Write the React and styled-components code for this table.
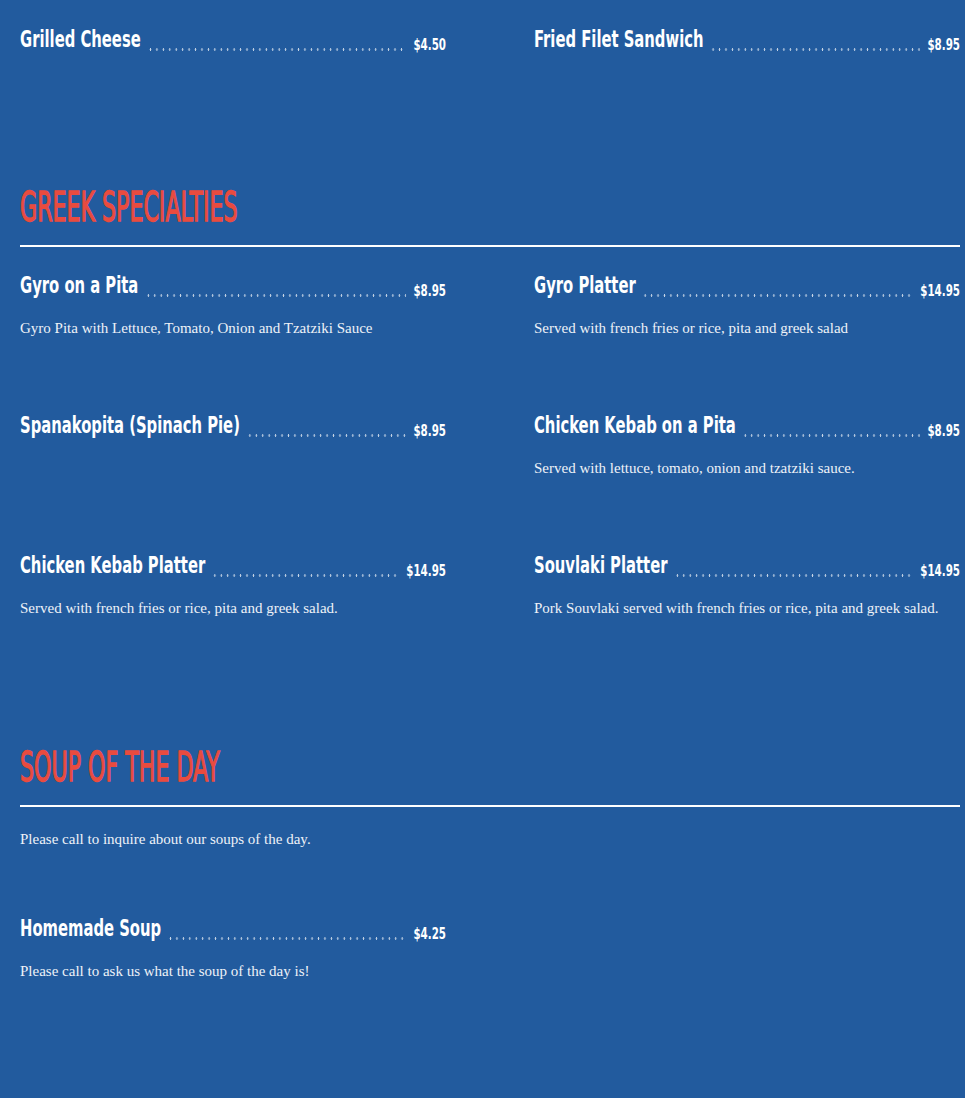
import styled, { createGlobalStyle } from "styled-components";

const GlobalStyle = createGlobalStyle`
  html, body {
    margin: 0;
    padding: 0;
    background: #225b9e;
    min-height: 100%;
  }
  body {
    font-family: "Liberation Serif", serif;
  }
`;

const NARROW = 0.715;

const Page = styled.div`
  width: 940px;
  padding: 25px 5px 60px 20px;
  color: #ffffff;
`;

const Section = styled.section`
  margin-top: ${(p) => p.gap || 0}px;
`;

const Heading = styled.h2`
  margin: 0;
  height: 48px;
  line-height: 48px;
  font-family: "DejaVu Sans", sans-serif;
  font-stretch: condensed;
  font-weight: 400;
  font-size: 40px;
  color: #e94b3f;
  -webkit-text-stroke: 1.3px #e94b3f;
  text-transform: uppercase;
  white-space: nowrap;
`;

const HeadingText = styled.span`
  display: inline-block;
  transform: scaleX(0.615);
  transform-origin: left center;
`;

const Rule = styled.hr`
  margin: 14px 0 0;
  border: 0;
  height: 2px;
  background: #ffffff;
`;

const Grid = styled.div`
  display: grid;
  grid-template-columns: 426px 426px;
  column-gap: 88px;
  margin-top: ${(p) => p.offset || 0}px;
`;

const Item = styled.div`
  padding-bottom: 73px;
`;

/* the title line is laid out wide and squeezed, to get the narrow sign-painter letters */
const TitleRow = styled.div`
  display: flex;
  align-items: flex-end;
  height: 28px;
  width: calc(100% / ${NARROW});
  transform: scaleX(${NARROW});
  transform-origin: left center;
`;

const Title = styled.h3`
  margin: 0;
  font-family: "DejaVu Sans", sans-serif;
  font-stretch: condensed;
  font-weight: 700;
  font-size: 23px;
  line-height: 28px;
  color: #ffffff;
  white-space: nowrap;
`;

const Leader = styled.span`
  flex: 1;
  height: 3px;
  margin: 0 10px 0 9px;
  background-image: radial-gradient(circle at center, rgba(255, 255, 255, 0.75) 1px, transparent 1.4px);
  background-size: 9px 3px;
  background-repeat: repeat-x;
  transform: translateY(-2px);
`;

const Price = styled.span`
  font-family: "DejaVu Sans", sans-serif;
  font-stretch: condensed;
  font-weight: 700;
  font-size: 16px;
  line-height: 20px;
  color: #ffffff;
  transform: translateY(2px);
`;

const Desc = styled.p`
  margin: 19px 0 0;
  font-family: "Liberation Serif", serif;
  font-size: 15px;
  line-height: 20px;
  color: #eef2f8;
`;

const Note = styled.p`
  margin: 22px 0 0;
  font-family: "Liberation Serif", serif;
  font-size: 15px;
  line-height: 20px;
  color: #eef2f8;
`;

const MenuItem = ({ item }) => (
  <Item>
    <TitleRow>
      <Title>{item.name}</Title>
      <Leader />
      <Price>{item.price}</Price>
    </TitleRow>
    {item.desc && <Desc>{item.desc}</Desc>}
  </Item>
);

const sandwiches = [
  { name: "Grilled Cheese", price: "$4.50" },
  { name: "Fried Filet Sandwich", price: "$8.95" },
];

const greek = [
  { name: "Gyro on a Pita", price: "$8.95", desc: "Gyro Pita with Lettuce, Tomato, Onion and Tzatziki Sauce" },
  { name: "Gyro Platter", price: "$14.95", desc: "Served with french fries or rice, pita and greek salad" },
  { name: "Spanakopita (Spinach Pie)", price: "$8.95" },
  { name: "Chicken Kebab on a Pita", price: "$8.95", desc: "Served with lettuce, tomato, onion and tzatziki sauce." },
  { name: "Chicken Kebab Platter", price: "$14.95", desc: "Served with french fries or rice, pita and greek salad." },
  { name: "Souvlaki Platter", price: "$14.95", desc: "Pork Souvlaki served with french fries or rice, pita and greek salad." },
];

const soups = [
  { name: "Homemade Soup", price: "$4.25", desc: "Please call to ask us what the soup of the day is!" },
];

export default function App() {
  return (
    <>
      <GlobalStyle />
      <Page>
        <Section>
          <Grid>
            {sandwiches.map((it) => (
              <MenuItem key={it.name} item={it} />
            ))}
          </Grid>
        </Section>
        <Section gap={57}>
          <Heading>
            <HeadingText>Greek Specialties</HeadingText>
          </Heading>
          <Rule />
          <Grid offset={24}>
            {greek.map((it) => (
              <MenuItem key={it.name} item={it} />
            ))}
          </Grid>
        </Section>
        <Section gap={52}>
          <Heading>
            <HeadingText>Soup of the Day</HeadingText>
          </Heading>
          <Rule />
          <Note>Please call to inquire about our soups of the day.</Note>
          <Grid offset={65}>
            {soups.map((it) => (
              <MenuItem key={it.name} item={it} />
            ))}
          </Grid>
        </Section>
      </Page>
    </>
  );
}
